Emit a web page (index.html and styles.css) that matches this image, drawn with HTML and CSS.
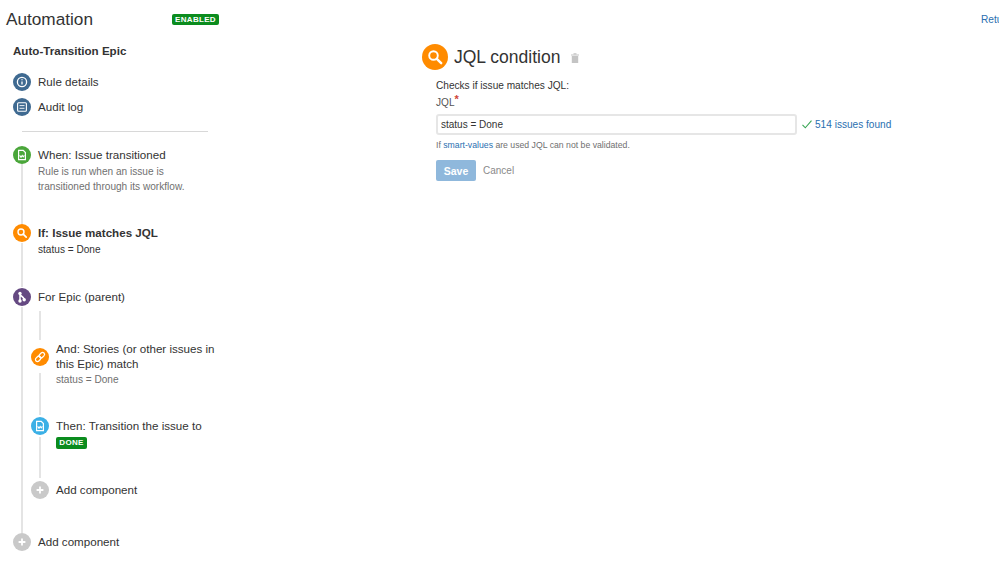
FILE: index.html
```html
<!DOCTYPE html>
<html lang="en">
<head>
  <meta charset="UTF-8" />
  <title>Automation</title>
  <link rel="stylesheet" href="styles.css">
</head>
<body>

<header class="page-header">
  <h1>Automation</h1>
  <span class="lozenge lozenge-head">Enabled</span>
  <a href="#" class="return-link">Return to list</a>
</header>

<div class="layout">

  <!-- Rule sidebar -->
  <aside class="sidebar">
    <h2 class="rule-name">Auto-Transition Epic</h2>

    <div class="nav-row">
      <svg class="icon" viewBox="0 0 18 18"><circle cx="9" cy="9" r="9" fill="#3f6a91"/><circle cx="9" cy="9" r="4.6" fill="none" stroke="#fff" stroke-width="1.3"/><path d="M9 8.4v3M9 6.2v1" stroke="#fff" stroke-width="1.3"/></svg>
      <span class="nav-label">Rule details</span>
    </div>
    <div class="nav-row">
      <svg class="icon" viewBox="0 0 18 18"><circle cx="9" cy="9" r="9" fill="#3f6a91"/><rect x="4.6" y="4.8" width="8.8" height="8.4" rx="1" fill="none" stroke="#fff" stroke-width="1.1"/><path d="M6.5 7.6h5M6.5 10.3h5" stroke="#fff" stroke-width=".9"/></svg>
      <span class="nav-label">Audit log</span>
    </div>

    <div class="divider"></div>

    <div class="step step-when">
      <div class="rail">
        <svg class="icon" viewBox="0 0 18 18"><circle cx="9" cy="9" r="9" fill="#4aa63a"/><path d="M5.6 4.4h4.600l2.200 2.200v7H5.600z" fill="none" stroke="#fff" stroke-width="1.200"/><path d="M6.600 9.400l1.400 1.800 1.200-1.800 1 1.400 1.200-1.400" fill="none" stroke="#fff" stroke-width="1.100"/></svg>
        <div class="rail-line"></div>
      </div>
      <div class="step-text">
        <div class="step-title">When: Issue transitioned</div>
        <div class="step-sub">Rule is run when an issue is<br>transitioned through its workflow.</div>
      </div>
    </div>

    <div class="step step-if">
      <div class="rail">
        <svg class="icon icon-ring" viewBox="0 0 18 18"><circle cx="9" cy="9" r="9" fill="#ff8b00"/><circle cx="8" cy="8" r="3" fill="none" stroke="#fff" stroke-width="1.4"/><path d="M10.2 10.2l3 3" stroke="#fff" stroke-width="1.7" stroke-linecap="round"/></svg>
        <div class="rail-line line-if"></div>
      </div>
      <div class="step-text">
        <div class="step-title title-active">If: Issue matches JQL</div>
        <div class="step-sub sub-dark">status = Done</div>
      </div>
    </div>

    <div class="step step-for">
      <div class="rail">
        <svg class="icon" viewBox="0 0 18 18"><circle cx="9" cy="9" r="9" fill="#654982"/><path d="M7 5.500v7.500M7 6.400c.4 2 3.800 1.900 4 5" fill="none" stroke="#fff" stroke-width="1.500"/><circle cx="7" cy="5.400" r="1.700" fill="#fff"/><circle cx="7" cy="13" r="1.700" fill="#fff"/><circle cx="11.200" cy="11.800" r="1.700" fill="#fff"/></svg>
        <div class="rail-line line-for"></div>
      </div>
      <div class="step-body">
        <div class="step-title step-text">For Epic (parent)</div>

        <div class="sub-steps">
          <div class="rail stub"><div class="rail-line"></div></div>

          <div class="step step-and">
            <div class="rail">
              <svg class="icon icon-and" viewBox="0 0 18 18"><circle cx="9" cy="9" r="9" fill="#ff8b00"/><g fill="none" stroke="#fff" stroke-width="1.200" transform="rotate(-45 9 9)"><rect x="3.400" y="7" width="6" height="4" rx="2"/><rect x="8.600" y="7" width="6" height="4" rx="2"/></g></svg>
              <div class="rail-line line-and"></div>
            </div>
            <div class="step-text text-and">
              <div class="step-title">And: Stories (or other issues in<br>this Epic) match</div>
              <div class="step-sub">status = Done</div>
            </div>
          </div>

          <div class="step step-then">
            <div class="rail">
              <svg class="icon" viewBox="0 0 18 18"><circle cx="9" cy="9" r="9" fill="#3bb0e6"/><path d="M5.600 4.400h4.600l2.200 2.200v7H5.600z" fill="none" stroke="#fff" stroke-width="1.200"/><path d="M6.600 9.400l1.400 1.800 1.200-1.800 1 1.400 1.200-1.400" fill="none" stroke="#fff" stroke-width="1.100"/></svg>
              <div class="rail-line line-then"></div>
            </div>
            <div class="step-text">
              <div class="step-title">Then: Transition the issue to</div>
              <span class="lozenge lozenge-done">Done</span>
            </div>
          </div>

          <div class="step">
            <div class="rail">
              <svg class="icon" viewBox="0 0 18 18"><circle cx="9" cy="9" r="9" fill="#c9c9c9"/><path d="M9 5.600v6.800M5.600 9h6.800" stroke="#fff" stroke-width="1.800"/></svg>
            </div>
            <div class="step-text">
              <div class="step-title">Add component</div>
            </div>
          </div>
        </div>
      </div>
    </div>

    <div class="step">
      <div class="rail">
        <svg class="icon" viewBox="0 0 18 18"><circle cx="9" cy="9" r="9" fill="#c9c9c9"/><path d="M9 5.600v6.800M5.600 9h6.800" stroke="#fff" stroke-width="1.800"/></svg>
      </div>
      <div class="step-text">
        <div class="step-title">Add component</div>
      </div>
    </div>
  </aside>

  <!-- Component editor -->
  <main class="editor">
    <div class="editor-head">
      <svg class="editor-icon" viewBox="0 0 26 26"><circle cx="13" cy="13" r="13" fill="#ff8b00"/><circle cx="11.500" cy="11.500" r="4.300" fill="none" stroke="#fff" stroke-width="1.900"/><path d="M14.800 14.800l4.400 4.400" stroke="#fff" stroke-width="2.400" stroke-linecap="round"/></svg>
      <h2 class="editor-title">JQL condition</h2>
      <svg class="trash" viewBox="0 0 8 10"><path d="M0 1.500h8V2.500H0zM2.500.3h3v1h-3zM.8 3h6.400v7H.8z" fill="#c4c4c4"/></svg>
    </div>

    <form class="editor-form">
      <p class="form-intro">Checks if issue matches JQL:</p>
      <label class="form-label">JQL<span class="required">*</span></label>
      <div class="input-row">
        <input class="text-input" type="text" value="status = Done">
        <svg class="check" viewBox="0 0 10 9"><path d="M.5 4.800l2.800 3L9.500.6" fill="none" stroke="#3aa655" stroke-width="1.100"/></svg>
        <a href="#" class="issues-found">514 issues found</a>
      </div>
      <p class="help">If <a href="#">smart-values</a> are used JQL can not be validated.</p>
      <div class="buttons">
        <button class="btn-save" type="button">Save</button>
        <a href="#" class="btn-cancel">Cancel</a>
      </div>
    </form>
  </main>
</div>

</body>
</html>
```

FILE: styles.css
```css
* { margin: 0; padding: 0; box-sizing: border-box; }
html, body {
  height: 100%;
  overflow: hidden;
  background: #fff;
  color: #333;
  font-family: "Liberation Sans", Arial, sans-serif;
  font-size: 11.6px;
}

a { color: #2a6fb0; text-decoration: none; }

.page-header {
  display: flex;
  align-items: center;
  height: 38px;
  padding-left: 6px;
  white-space: nowrap;
}

.page-header h1 {
  width: 166px;
  flex-shrink: 0;
  font-size: 17.2px;
  font-weight: normal;
}

.lozenge {
  display: inline-block;
  background: #0b8c1e;
  color: #fff;
  font-size: 8px;
  font-weight: bold;
  text-transform: uppercase;
  text-align: center;
  border-radius: 2px;
  letter-spacing: 0.3px;
}

.lozenge-head { width: 47px; height: 11px; line-height: 11px; flex-shrink: 0; }
.lozenge-done { display: block; width: 31px; height: 12px; line-height: 12px; margin-top: 4px; }

.return-link {
  flex-shrink: 0;
  margin-left: 762px;
  font-size: 10.1px;
}

.layout { display: flex; }

.sidebar {
  width: 222px;
  flex-shrink: 0;
  padding-left: 13px;
}

.rule-name {
  font-size: 11.6px;
  font-weight: bold;
  line-height: 15px;
  margin: 5px 0 15px;
  color: #333;
}

.nav-row {
  display: flex;
  align-items: center;
  height: 18px;
  margin-bottom: 7px;
}

.nav-label { padding: 0 0 2px 7px; }

.icon {
  display: block;
  width: 18px;
  height: 18px;
  flex-shrink: 0;
}

.divider {
  width: 186px;
  height: 1px;
  margin: 15px 0 14px 9px;
  background: #d8d8d8;
}

.step { display: flex; }

.rail {
  display: flex;
  flex-direction: column;
  align-items: center;
  width: 18px;
  flex-shrink: 0;
}

.rail-line {
  flex: 1;
  width: 2px;
  background: #e4e4e4;
}

.step-text { padding-left: 7px; }

.step-title { line-height: 15px; padding-top: 1px; }
.title-active { font-weight: bold; }

.step-sub {
  margin-top: 2px;
  color: #707070;
  font-size: 10.1px;
  line-height: 15px;
}

.sub-dark { color: #333; }

.step-when { height: 78px; }
.step-if { height: 64px; }
.line-if { margin-top: 1px; margin-bottom: 1px; }
.step-for { height: 245px; }
.line-for { margin-top: 1px; }

.step-body { flex: 1; }

.sub-steps { margin-top: 7px; }

.stub { height: 29px; }

.step-and { height: 77px; }
.icon-and { margin-top: 8px; }
.line-and { margin-top: 7px; margin-bottom: 2px; }
.text-and { white-space: nowrap; }
.text-and .step-sub { margin-top: 1px; }

.step-then { height: 64px; }
.line-then { margin-top: 2px; margin-bottom: 3px; }

.editor { padding: 6px 0 0 200px; }

.editor-head {
  display: flex;
  align-items: center;
  height: 26px;
}

.editor-icon { width: 26px; height: 26px; flex-shrink: 0; }

.editor-title {
  margin-left: 6px;
  font-size: 17.5px;
  font-weight: normal;
  white-space: nowrap;
}

.trash { width: 8px; height: 10px; margin: 2px 0 0 11px; }

.editor-form { padding-left: 14px; }

.form-intro {
  margin-top: 9px;
  font-size: 10.1px;
  line-height: 14px;
}

.form-label {
  display: block;
  margin-top: 3px;
  font-size: 10.1px;
  line-height: 14px;
  color: #555;
}

.required {
  color: #d04437;
  vertical-align: 3px;
  line-height: 0;
  font-size: 11px;
  font-weight: bold;
}

.input-row {
  display: flex;
  align-items: center;
  margin-top: 4px;
  white-space: nowrap;
}

.text-input {
  width: 361px;
  height: 21px;
  padding: 0 3px;
  border: 2px solid #e6e6e6;
  border-radius: 3px;
  color: #333;
  font-family: inherit;
  font-size: 10px;
}

.check { width: 10px; height: 9px; margin-left: 5px; }
.issues-found { margin-left: 3px; font-size: 10.1px; }

.help {
  margin-top: 5px;
  font-size: 8.7px;
  line-height: 11px;
  color: #707070;
  white-space: nowrap;
}

.buttons {
  display: flex;
  align-items: center;
  margin-top: 9px;
}

.btn-save {
  width: 40px;
  height: 21px;
  background: #8fb8dc;
  color: #fff;
  border: none;
  border-radius: 2px;
  font-family: inherit;
  font-size: 10.5px;
  font-weight: bold;
}

.btn-cancel { margin-left: 7px; font-size: 10px; color: #8a8a8a; }
```
